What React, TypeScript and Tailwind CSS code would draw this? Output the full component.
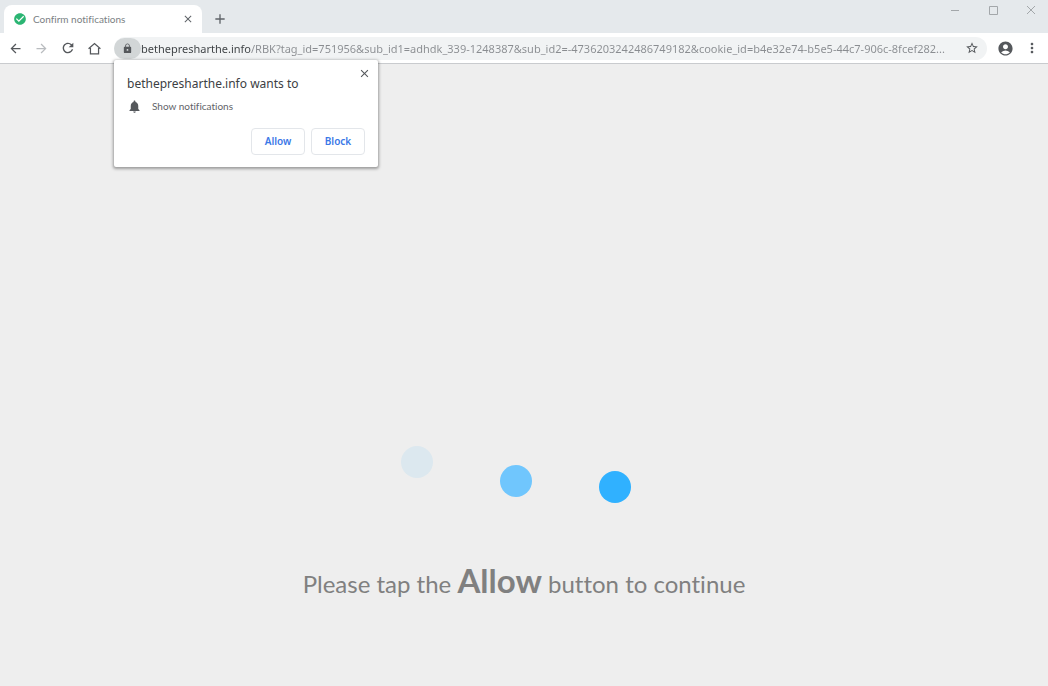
import { useState } from "react";
import {
  MdAccountCircle,
  MdAdd,
  MdArrowBack,
  MdArrowForward,
  MdCheckCircle,
  MdClose,
  MdLock,
  MdMoreVert,
  MdNotifications,
  MdRefresh,
  MdStarBorder,
} from "react-icons/md";

function HomeIcon() {
  return (
    <svg
      width="15"
      height="15"
      viewBox="0 0 24 24"
      fill="none"
      stroke="currentColor"
      strokeWidth="2"
      strokeLinejoin="miter"
    >
      <path d="M2.5 12.5L12 4l9.500 8.500M5.500 11v9.500h13V11" />
    </svg>
  );
}

function WindowControls() {
  return (
    <div className="ml-auto flex gap-5 pr-2 text-[#a3a7aa]">
      <button type="button" aria-label="Minimize" className="flex h-5 w-[18px] items-center justify-center">
        <svg width="10" height="10" viewBox="0 0 10 10" fill="none" stroke="currentColor">
          <path d="M1 5.5h8" />
        </svg>
      </button>
      <button type="button" aria-label="Maximize" className="flex h-5 w-[18px] items-center justify-center">
        <svg width="10" height="10" viewBox="0 0 10 10" fill="none" stroke="currentColor">
          <path d="M1.5 1.5h8v8h-8z" />
        </svg>
      </button>
      <button type="button" aria-label="Close window" className="flex h-5 w-[18px] items-center justify-center">
        <svg width="10" height="10" viewBox="0 0 10 10" fill="none" stroke="currentColor">
          <path d="M1 1l8 8M9 1l-8 8" />
        </svg>
      </button>
    </div>
  );
}

function TabStrip() {
  return (
    <div className="flex h-[33px] bg-[#e5e9ec] pl-1">
      <div className="mt-[5px] flex w-[198px] items-center rounded-t-lg bg-white pr-2 pl-[9px]">
        <MdCheckCircle className="size-[14px] text-[#2bb573]" />
        <span className="ml-[6px] font-[Lato,sans-serif] text-[10px] text-[#7b7f83]">Confirm notifications</span>
        <button type="button" aria-label="Close tab" className="ml-auto text-[#5f6368]">
          <MdClose className="size-3" />
        </button>
      </div>
      <button type="button" aria-label="New tab" className="mt-[5px] ml-[10px] text-[#5f6368]">
        <MdAdd className="size-4" />
      </button>
      <WindowControls />
    </div>
  );
}

function PermissionPrompt({ onClose }: { onClose: () => void }) {
  return (
    <section
      role="dialog"
      aria-label="Permission request"
      className="absolute top-[23px] left-0 z-10 w-[264px] rounded-xs bg-white px-[13px] pt-[15px] pb-3 shadow-[0_1px_3px_1px_rgba(0,0,0,0.35)]"
    >
      <button
        type="button"
        aria-label="Close"
        onClick={onClose}
        className="absolute top-[7px] right-[7px] text-[#55585c]"
      >
        <MdClose className="size-[13px]" />
      </button>
      <h2 className="text-xs leading-[18px] text-[#3c4043]">bethepresharthe.info wants to</h2>
      <p className="mt-1 flex h-5 items-center gap-[10px] font-[Lato,sans-serif] text-[10px] text-[#5f6368]">
        <MdNotifications className="size-[15px] text-[#55585c]" />
        Show notifications
      </p>
      <div className="mt-[11px] flex justify-end gap-[6px]">
        <button
          type="button"
          onClick={onClose}
          className="h-[27px] w-[54px] rounded-sm border border-[#e3e6ea] text-[10px] font-semibold text-[#3b78e7]"
        >
          Allow
        </button>
        <button
          type="button"
          onClick={onClose}
          className="h-[27px] w-[54px] rounded-sm border border-[#e3e6ea] text-[10px] font-semibold text-[#3b78e7]"
        >
          Block
        </button>
      </div>
    </section>
  );
}

function Toolbar() {
  const [promptOpen, setPromptOpen] = useState(true);
  return (
    <div className="flex h-[31px] items-center border-b border-[#c9cbce] bg-white pr-2 pl-2 text-[#55585c]">
      <div className="flex gap-[11px]">
        <button type="button" aria-label="Back">
          <MdArrowBack className="size-[15px]" />
        </button>
        <button type="button" aria-label="Forward" className="text-[#b9bcbf]">
          <MdArrowForward className="size-[15px]" />
        </button>
        <button type="button" aria-label="Reload">
          <MdRefresh className="size-4" />
        </button>
        <button type="button" aria-label="Home">
          <HomeIcon />
        </button>
      </div>
      <div className="relative ml-3 flex h-[23px] min-w-0 flex-1 items-center rounded-full bg-[#f1f3f4]">
        <button
          type="button"
          aria-label="Site information"
          onClick={() => setPromptOpen(true)}
          className="flex h-[21px] w-[27px] shrink-0 items-center justify-center rounded-full bg-[#d2d6d7]"
        >
          <MdLock className="size-[11px]" />
        </button>
        <input
          type="text"
          aria-label="Address"
          defaultValue="bethepresharthe.info/RBK?tag_id=751956&sub_id1=adhdk_339-1248387&sub_id2=-4736203242486749182&cookie_id=b4e32e74-b5e5-44c7-906c-8fcef282..."
          className="h-5 min-w-0 flex-1 bg-[linear-gradient(to_right,#3c4043_110px,#8a8d91_110px)] bg-clip-text text-[11px] text-ellipsis text-transparent caret-black outline-none"
        />
        <button type="button" aria-label="Bookmark this page" className="mr-2 ml-2">
          <MdStarBorder className="size-[14px]" />
        </button>
        {promptOpen && <PermissionPrompt onClose={() => setPromptOpen(false)} />}
      </div>
      <button type="button" aria-label="Profile" className="ml-[10px]">
        <MdAccountCircle className="size-[17px]" />
      </button>
      <button type="button" aria-label="Browser menu" className="ml-[10px]">
        <MdMoreVert className="size-4" />
      </button>
    </div>
  );
}

function LoadingDots() {
  return (
    <svg width="246" height="60" viewBox="0 0 246 60" role="img" aria-label="Loading">
      <circle cx="16" cy="17" r="16" fill="#dce8ef" />
      <circle cx="115" cy="36" r="16" fill="#70c6fd" />
      <circle cx="214" cy="42" r="16" fill="#30b1ff" />
    </svg>
  );
}

export default function App() {
  return (
    <div className="flex min-h-screen flex-col bg-[#eeeeee] font-['Noto_Sans',sans-serif] [font-variant-ligatures:none]">
      <header>
        <TabStrip />
        <Toolbar />
      </header>
      <main className="flex flex-1 flex-col items-center justify-end gap-[50px] pb-[77px]">
        <LoadingDots />
        <p className="text-center font-[Lato,sans-serif] text-2xl leading-[50px] text-[#808080]">
          Please tap the <strong className="text-[33px] font-bold">Allow</strong> button to continue
        </p>
      </main>
    </div>
  );
}
